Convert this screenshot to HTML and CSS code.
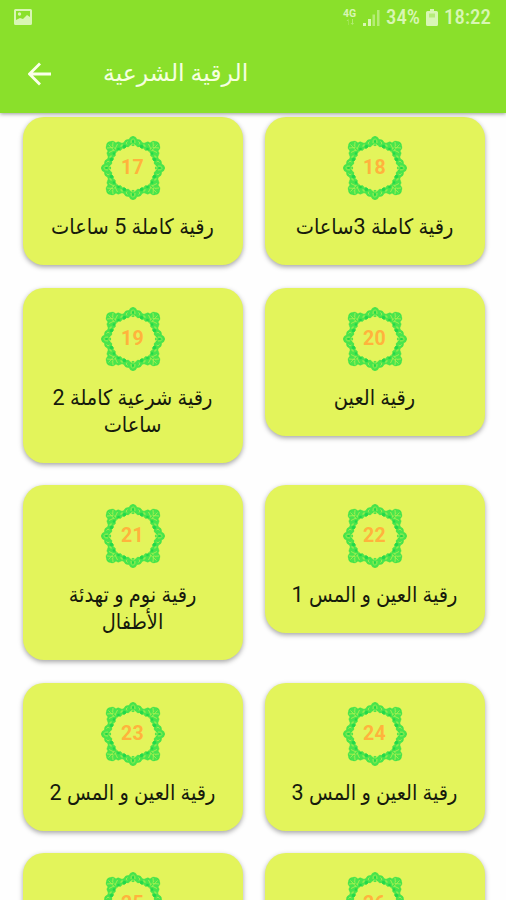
FILE: index.html
```html
<!DOCTYPE html>
<html lang="ar">
<head>
<meta charset="utf-8">
<title>الرقية الشرعية</title>
<link rel="stylesheet" href="styles.css">
</head>
<body>
<svg class="defs" aria-hidden="true">
  <defs>
    <g id="half">
      <path class="leaf" d="M0-31.8Q3-31.500 4-28.500Q8-29 9-25.500Q11-24 13-25.500Q15-27 17-25Q20-28 22.500-26.500Q25.500-26.500 25.500-24L17.500-17.500Q15.500-15.500 14.500-18Q11.500-16.500 11-20Q8.500-18 7-21.500Q4-20 3-23Q1-23.500 0-22Z"/>
      <path class="cut" d="M0-29.500Q2.500-28 2-25M5.500-26.500Q8-25 6-23.500M10-23Q12.500-24 12-21M15.500-24L18-19M20-26L20.500-20M23.500-24.500L17-18.500M0-24l2 .5"/>
      <circle class="core" cx="8.500" cy="-21.500" r="1.700"/>
      <circle class="core" cx="14.500" cy="-19" r="1.300"/>
      <circle class="core" cx="0" cy="-26.500" r="1"/>
    </g>
    <g id="side"><use href="#half"/><use href="#half" transform="scale(-1 1)"/></g>
    <symbol id="ornament" viewBox="-32 -32 64 64">
      <use href="#side"/><use href="#side" transform="rotate(90)"/><use href="#side" transform="rotate(180)"/><use href="#side" transform="rotate(270)"/>
    </symbol>
  </defs>
</svg>
<header class="header">
  <div class="status">
    <svg class="picture" viewBox="0 0 18 16"><path fill-rule="evenodd" d="M1.500 0h15Q18 0 18 1.500v13q0 1.500-1.500 1.500h-15Q0 16 0 14.500v-13Q0 0 1.500 0ZM2 2v9l4-2 3 1 4-4 3 2V2Z"/><circle cx="5.500" cy="5" r="1.700"/></svg>
    <div class="indicators">
      <div class="network"><span>4G</span><svg viewBox="0 0 10 6"><path d="M3 6V2H1.500L3.500 0V6ZM7 0v4H5.500L7.500 6 9 4H8V0Z"/></svg></div>
      <svg class="signal" viewBox="0 0 17 17"><path d="M0 14h3v3H0zM5 10h3v7H5z"/><path class="weak" d="M9.500 5.500h2.500V17H9.500zM14 1h2.500v16H14z"/></svg>
      <span class="percent">34%</span>
      <svg class="battery" viewBox="0 0 12 17"><path fill-rule="evenodd" d="M4 0h4v2h2.500Q12 2 12 3.500v12q0 1.500-1.500 1.500h-9Q0 17 0 15.500v-12Q0 2 1.500 2H4Z"/><path class="level" d="M3 4.500h6v4H3z"/></svg>
      <span class="clock">18:22</span>
    </div>
  </div>
  <div class="toolbar">
    <svg class="back" viewBox="0 0 24 24"><path d="M23 12H2M12 1.500 1.500 12 12 22.500"/></svg>
    <h1 dir="rtl">الرقية الشرعية</h1>
  </div>
</header>
<main class="grid">
  <article class="card"><div class="badge"><svg><use href="#ornament"/></svg><b>17</b></div><p dir="rtl">رقية كاملة 5 ساعات</p></article>
  <article class="card"><div class="badge"><svg><use href="#ornament"/></svg><b>18</b></div><p dir="rtl">رقية كاملة 3ساعات</p></article>
  <article class="card"><div class="badge"><svg><use href="#ornament"/></svg><b>19</b></div><p dir="rtl">رقية شرعية كاملة 2<br>ساعات</p></article>
  <article class="card"><div class="badge"><svg><use href="#ornament"/></svg><b>20</b></div><p dir="rtl">رقية العين</p></article>
  <article class="card"><div class="badge"><svg><use href="#ornament"/></svg><b>21</b></div><p dir="rtl">رقية نوم و تهدئة<br>الأطفال</p></article>
  <article class="card"><div class="badge"><svg><use href="#ornament"/></svg><b>22</b></div><p dir="rtl">رقية العين و المس 1</p></article>
  <article class="card"><div class="badge"><svg><use href="#ornament"/></svg><b>23</b></div><p dir="rtl">رقية العين و المس 2</p></article>
  <article class="card"><div class="badge"><svg><use href="#ornament"/></svg><b>24</b></div><p dir="rtl">رقية العين و المس 3</p></article>
  <article class="card"><div class="badge"><svg><use href="#ornament"/></svg><b>25</b></div></article>
  <article class="card"><div class="badge"><svg><use href="#ornament"/></svg><b>26</b></div></article>
</main>
</body>
</html>
```
FILE: styles.css
```css
* { box-sizing: border-box; }
body { margin: 0; height: 900px; overflow: hidden; display: flex; flex-direction: column; background: #fefefe; font-family: Roboto, "DejaVu Sans", sans-serif; }
.defs { position: absolute; width: 0; height: 0; }
.leaf { fill: #48e54c; stroke: #3fe14a; stroke-width: .5; }
.cut { fill: none; stroke: #a9ee50; stroke-width: .9; }
.core { fill: #22d84a; }
.header { position: relative; z-index: 1; flex: none; height: 113px; background: #8ae02b; color: #f6ffe0; box-shadow: 0 1px 4px rgba(0,0,0,.4); }
.status { display: flex; justify-content: space-between; align-items: center; height: 34px; padding: 0 14px 0 14px; color: #d8f6b4; fill: currentColor; }
.picture { width: 18px; height: 16px; }
.indicators { display: flex; align-items: center; font-size: 20.8px; font-weight: 500; }
.network { display: flex; flex-direction: column; align-items: center; width: 15px; margin-right: 6px; font-size: 10.5px; font-weight: 700; line-height: 10px; }
.network svg { width: 10px; height: 6px; opacity: .5; }
.signal { width: 17px; height: 17px; margin-right: 6px; }
.weak { opacity: .55; }
.percent, .clock { display: block; font-stretch: condensed; white-space: nowrap; }
.percent { width: 34px; }
.battery { width: 12px; height: 17px; margin: 0 6px; }
.level { fill: #b4ec78; }
.clock { width: 48px; }
.toolbar { display: flex; align-items: center; height: 79px; padding-left: 28px; }
.back { width: 24px; height: 24px; fill: none; stroke: #fbffe9; stroke-width: 2.8; }
h1 { margin: -2px 0 0 51px; font-size: 23.6px; font-weight: 400; line-height: 30px; white-space: nowrap; }
.grid { display: grid; grid-template-columns: 220px 220px; grid-auto-rows: max-content; gap: 22.6px 22px; align-items: start; flex: 1; min-height: 0; overflow: hidden; padding: 4px 0 0 22.5px; }
.card { min-height: 148px; padding: 19px 0 24px; border-radius: 21px; background: #e3f45b; box-shadow: 0 2px 5px rgba(0,0,0,.35); }
.badge { display: grid; place-items: center; width: 64px; height: 64px; margin: 0 auto; }
.badge > * { grid-area: 1 / 1; }
.badge svg { width: 64px; height: 64px; }
.badge b { color: #ffb33c; font-size: 19.5px; line-height: 24px; font-weight: 700; letter-spacing: .3px; }
.card p { margin: 13px 0 1px; color: #161a0c; font-family: Roboto, "DejaVu Sans Condensed", "DejaVu Sans", sans-serif; font-size: 21.5px; line-height: 27px; text-align: center; white-space: nowrap; }
```
